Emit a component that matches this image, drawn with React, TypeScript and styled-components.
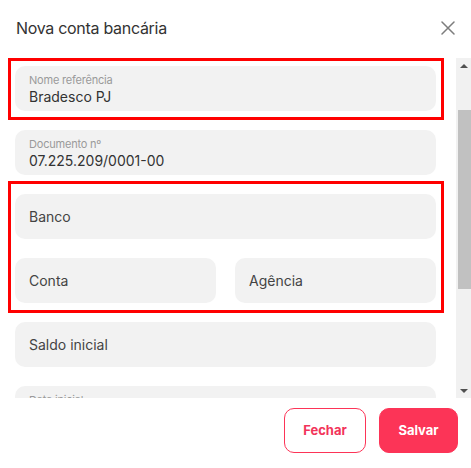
import React, { useLayoutEffect, useRef } from "react";
import styled, { createGlobalStyle } from "styled-components";

const GlobalStyle = createGlobalStyle`
  html, body {
    margin: 0;
    padding: 0;
    background: #ffffff;
  }
  body {
    font-family: Inter, "Noto Sans", "Liberation Sans", sans-serif;
    color: #333333;
  }
  * {
    box-sizing: border-box;
  }
`;

const Modal = styled.div`
  width: 471px;
  height: 468px;
  display: flex;
  flex-direction: column;
  background: #ffffff;
`;

const Header = styled.div`
  height: 58px;
  flex: none;
  display: flex;
  align-items: center;
  justify-content: space-between;
  padding: 0 15px 2px 16px;
`;

const Title = styled.h2`
  margin: 0;
  font-size: 16px;
  font-weight: 400;
  color: #333333;
  letter-spacing: -0.3px;
`;

const CloseButton = styled.button`
  width: 16px;
  height: 16px;
  padding: 0;
  border: none;
  background: none;
  display: flex;
  align-items: center;
  justify-content: center;
  cursor: pointer;
`;

const BodyWrap = styled.div`
  height: 340px;
  flex: none;
  display: flex;
`;

const Body = styled.div`
  flex: 1;
  overflow: hidden;
`;

const ScrollBar = styled.div`
  width: 15px;
  flex: none;
  display: flex;
  flex-direction: column;
  background: #f1f1f1;
  margin-left: 1px;
`;

const ArrowButton = styled.div<{ $down?: boolean }>`
  height: 15px;
  flex: none;
  display: flex;
  align-items: center;
  justify-content: center;

  &::after {
    content: "";
    width: 0;
    height: 0;
    border-left: 4px solid transparent;
    border-right: 4px solid transparent;
    ${(p) =>
      p.$down ? "border-top: 4px solid #505050;" : "border-bottom: 4px solid #505050;"}
  }
`;

const Track = styled.div`
  flex: 1;
  padding: 0 0 0 2px;
`;

const Thumb = styled.div`
  background: #c1c1c1;
  height: 179px;
`;

const Form = styled.div`
  display: flex;
  flex-direction: column;
  padding: 5px 19px 18px 15px;
`;

const Highlight = styled.div<{ $top: number; $bottom: number }>`
  display: flex;
  flex-direction: column;
  gap: 19px;
  margin: 0 -8px 0 -7px;
  padding: ${(p) => p.$top}px 5px ${(p) => p.$bottom}px 4px;
  border: 3px solid #ff0000;
`;

const Field = styled.div<{ $mt?: number }>`
  height: 45px;
  flex: none;
  margin-top: ${(p) => p.$mt ?? 0}px;
  border-radius: 10px;
  background: #f2f2f2;
  padding: 0 14px;
  display: flex;
  flex-direction: column;
  justify-content: center;
`;

const Row = styled.div`
  display: flex;
  gap: 19px;

  & > * {
    flex: 1 1 0;
  }
`;

const Label = styled.span`
  font-size: 11px;
  line-height: 15px;
  color: #9a9a9a;
  letter-spacing: -0.2px;
`;

const Value = styled.span`
  font-size: 14px;
  line-height: 17px;
  color: #333333;
`;

const Placeholder = styled.span`
  font-size: 14px;
  line-height: 18px;
  color: #444444;
`;

const Spacer = styled.div<{ $h: number }>`
  height: ${(p) => p.$h}px;
  flex: none;
`;

const Footer = styled.div`
  flex: 1;
  display: flex;
  justify-content: flex-end;
  align-items: center;
  gap: 13px;
  padding: 0 13px 6px 0;
`;

const Button = styled.button<{ $primary?: boolean }>`
  height: 45px;
  width: ${(p) => (p.$primary ? 79 : 82)}px;
  border-radius: 10px;
  font-family: Inter, "Noto Sans", "Liberation Sans", sans-serif;
  font-size: 13px;
  font-weight: 700;
  cursor: pointer;
  border: 1px solid #fc3457;
  background: ${(p) => (p.$primary ? "#fc3457" : "#ffffff")};
  color: ${(p) => (p.$primary ? "#ffffff" : "#f2345a")};
`;

const CloseIcon = () => (
  <svg width="14" height="14" viewBox="0 0 14 14" fill="none">
    <path d="M1 1L13 13M13 1L1 13" stroke="#7d7d7d" strokeWidth="1.5" strokeLinecap="round" />
  </svg>
);

const TextField = ({ label, value, mt }: { label: string; value: string; mt?: number }) => (
  <Field $mt={mt}>
    <Label>{label}</Label>
    <Value>{value}</Value>
  </Field>
);

const EmptyField = ({ text, mt }: { text: string; mt?: number }) => (
  <Field $mt={mt}>
    <Placeholder>{text}</Placeholder>
  </Field>
);

const SCROLL_TOP = 70;

export default function App() {
  const bodyRef = useRef<HTMLDivElement>(null);

  useLayoutEffect(() => {
    if (bodyRef.current) bodyRef.current.scrollTop = SCROLL_TOP;
  }, []);

  return (
    <>
      <GlobalStyle />
      <Modal>
        <Header>
          <Title>Nova conta bancária</Title>
          <CloseButton aria-label="Fechar">
            <CloseIcon />
          </CloseButton>
        </Header>
        <BodyWrap>
          <Body ref={bodyRef}>
            <Form>
              <EmptyField text="Tipo de conta" />
              <Spacer $h={20} />
              <Highlight $top={5} $bottom={6}>
                <TextField label="Nome referência" value="Bradesco PJ" />
              </Highlight>
              <TextField label="Documento nº" value="07.225.209/0001-00" mt={10} />
              <Spacer $h={6} />
              <Highlight $top={10} $bottom={7}>
                <EmptyField text="Banco" />
                <Row>
                  <EmptyField text="Conta" />
                  <EmptyField text="Agência" />
                </Row>
              </Highlight>
              <EmptyField text="Saldo inicial" mt={9} />
              <TextField label="Data inicial" value="01/01/2024" mt={19} />
              <EmptyField text="Gerente" mt={19} />
              <EmptyField text="Telefone" mt={19} />
            </Form>
          </Body>
          <ScrollBar aria-hidden>
            <ArrowButton />
            <Track>
              <Thumb style={{ marginTop: 37 }} />
            </Track>
            <ArrowButton $down />
          </ScrollBar>
        </BodyWrap>
        <Footer>
          <Button>Fechar</Button>
          <Button $primary>Salvar</Button>
        </Footer>
      </Modal>
    </>
  );
}
